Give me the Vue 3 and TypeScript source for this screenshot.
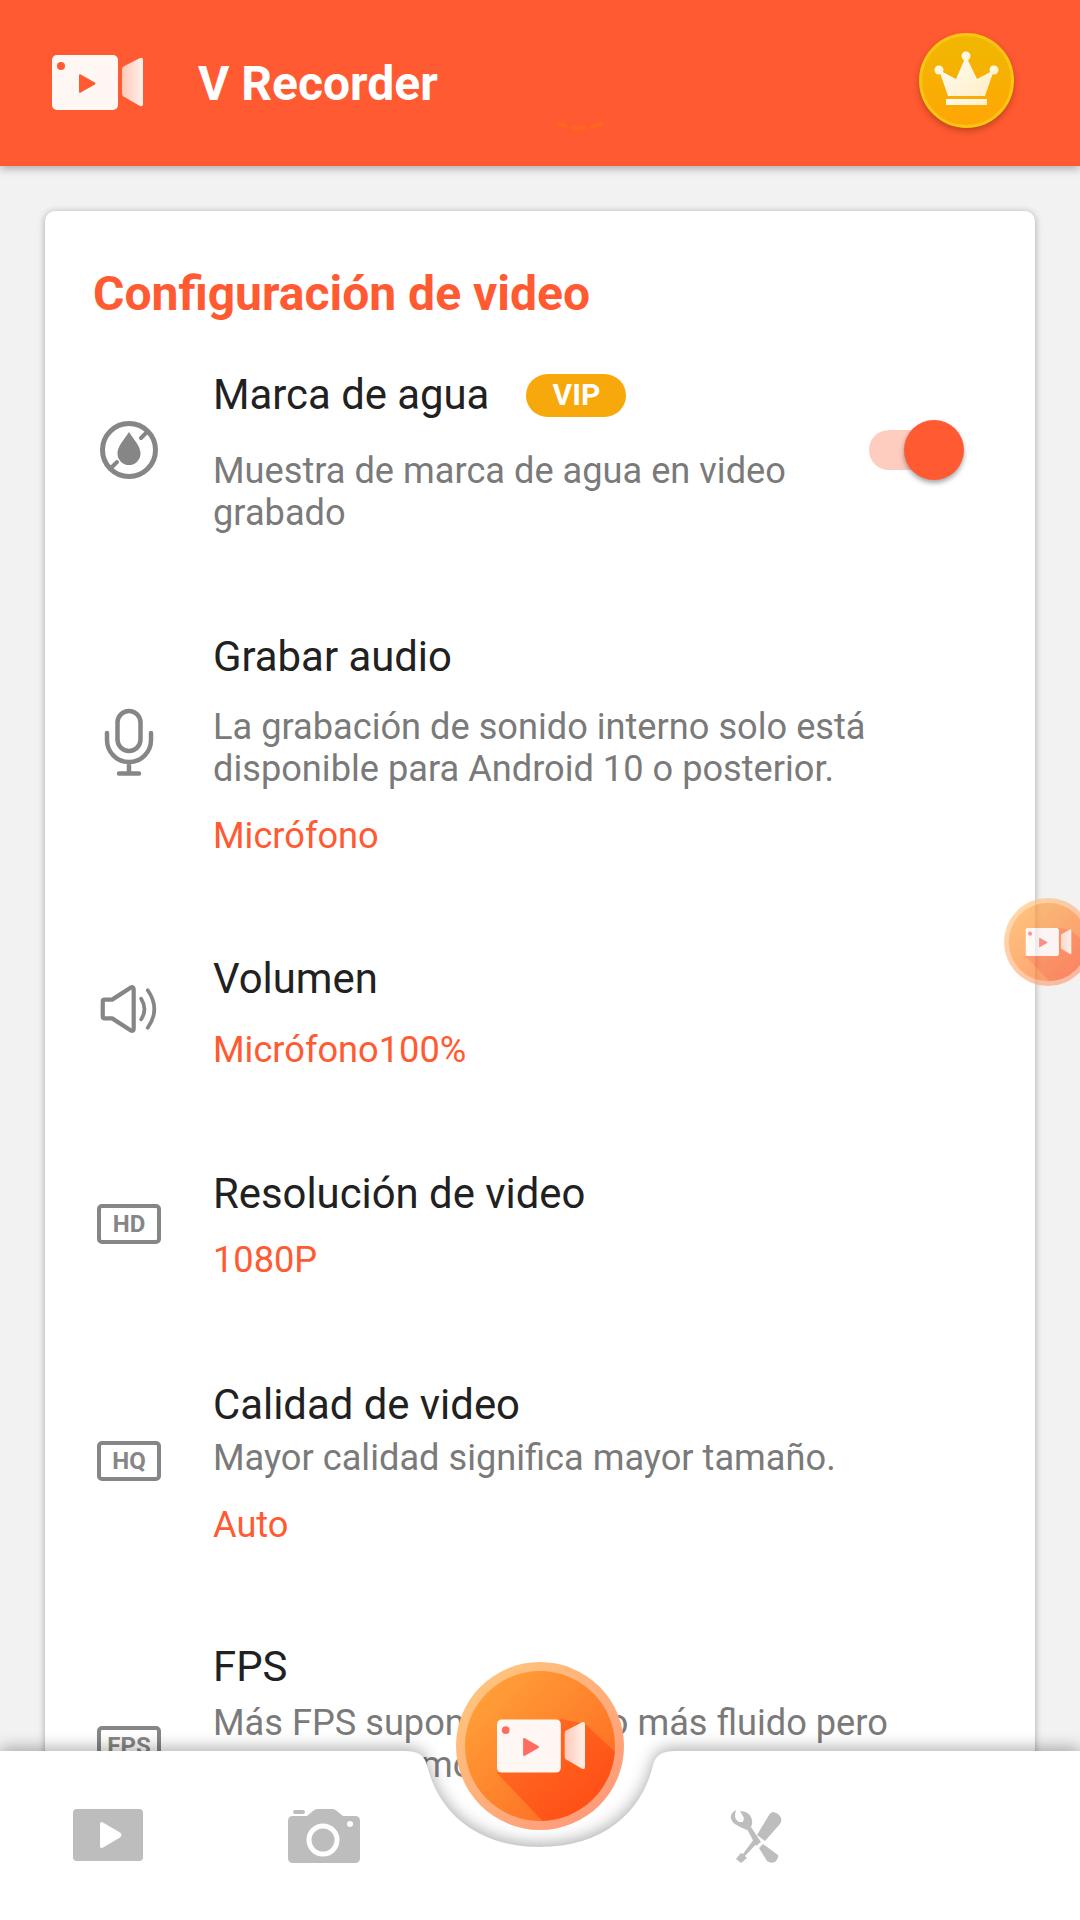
<template>
  <div class="screen">
    <!-- shared artwork for the camera logo and the round record button -->
    <svg class="defs" width="0" height="0" aria-hidden="true">
      <defs>
        <linearGradient id="cone" x1="0" y1="0" x2="1" y2="0">
          <stop offset="0" stop-color="#ffc9b8" />
          <stop offset="1" stop-color="#fff1ea" />
        </linearGradient>
        <linearGradient id="ring" x1="0.15" y1="0.1" x2="0.85" y2="0.9">
          <stop offset="0" stop-color="#ffc47c" />
          <stop offset="1" stop-color="#ff9a7a" />
        </linearGradient>
        <linearGradient id="disc" x1="0.12" y1="0.12" x2="0.88" y2="0.88">
          <stop offset="0" stop-color="#ff9f38" />
          <stop offset="1" stop-color="#ff6a22" />
        </linearGradient>
        <linearGradient id="long-shadow" x1="0.2" y1="0.2" x2="0.9" y2="0.9">
          <stop offset="0" stop-color="#ff6a22" />
          <stop offset="1" stop-color="#ff4713" />
        </linearGradient>
        <clipPath id="disc-clip"><circle cx="84" cy="84" r="75" /></clipPath>
        <symbol id="cam" viewBox="0 0 91 55">
          <rect x="0" y="0" width="66" height="55" rx="5" fill="#fff7f3" />
          <circle cx="9" cy="11" r="4" fill="currentColor" />
          <path d="M27 20.5q0-2 1.800-1l14 8q1.500 1 0 2l-14 8q-1.800 1-1.800-1z" fill="currentColor" />
          <path d="M70 14.500q0-2 1.500-3l16.500-8.500q3-1 3 2v44q0 3-3 2l-16.500-9.500q-1.500-1-1.500-3z" fill="url(#cone)" />
        </symbol>
        <symbol id="record" viewBox="0 0 168 168">
          <circle cx="84" cy="84" r="84" fill="url(#ring)" />
          <circle cx="84" cy="84" r="75" fill="url(#disc)" />
          <path d="M41 111L105 57L129 62L170 100L170 170L97 170Z" fill="url(#long-shadow)" clip-path="url(#disc-clip)" />
          <use href="#cam" x="41" y="57" width="88" height="54" />
        </symbol>
      </defs>
    </svg>

    <header class="app-bar">
      <svg class="app-logo" width="91" height="55"><use href="#cam" /></svg>
      <span class="app-name">V Recorder</span>
      <svg class="glitch" width="50" height="10" viewBox="0 0 50 10">
        <path d="M2 3l8 2M16 7h14M36 6l10-4" stroke="#ff6d12" stroke-width="2.500" stroke-linecap="round" fill="none" />
      </svg>
      <svg class="crown" width="95" height="95" viewBox="0 0 95 95">
        <defs>
          <linearGradient id="coin" x1="0" y1="0" x2="0" y2="1">
            <stop offset="0" stop-color="#f0b800" />
            <stop offset="1" stop-color="#ffa606" />
          </linearGradient>
          <linearGradient id="gold-white" x1="0" y1="0" x2="1" y2="1">
            <stop offset="0" stop-color="#fffdf6" />
            <stop offset="1" stop-color="#ffeec4" />
          </linearGradient>
        </defs>
        <circle cx="47.500" cy="47.500" r="46" fill="url(#coin)" stroke="#fbc512" stroke-width="3" />
        <g fill="url(#gold-white)">
          <circle cx="47" cy="23" r="4.500" />
          <circle cx="20" cy="37" r="4.500" />
          <circle cx="75" cy="37" r="4.500" />
          <path d="M20 37L37 46L47 23L58 46L75 37L66 63H29Z" />
          <rect x="27" y="66" width="41" height="6" />
        </g>
      </svg>
    </header>

    <main class="content">
      <section class="card">
        <h2 class="card-title">Configuración de video</h2>

        <div v-for="row in rows" :key="row.title" class="row" :class="row.mod">
          <div class="row-icon">
            <svg v-if="row.icon === 'drop'" width="64" height="64" viewBox="0 0 64 64">
              <circle cx="32" cy="32" r="26.500" fill="none" stroke="#868686" stroke-width="5" />
              <path d="M32 14c6 9 11.500 14.500 11.500 21.500a11.500 11.500 0 0 1-23 0C20.500 28.500 26 23 32 14z" fill="#868686" />
              <path d="M44 20l6-6M14 50l6-6" stroke="#868686" stroke-width="4" stroke-linecap="round" />
            </svg>
            <svg v-else-if="row.icon === 'mic'" class="mic" width="64" height="70" viewBox="0 0 64 70">
              <rect x="20.500" y="4" width="23" height="40" rx="11.500" fill="none" stroke="#868686" stroke-width="4.500" />
              <path d="M10 26v7a22 22 0 0 0 44 0v-7M32 55v11M22 66.500h20" fill="none" stroke="#868686" stroke-width="4.500" stroke-linecap="round" />
            </svg>
            <svg v-else-if="row.icon === 'speaker'" class="speaker" width="60" height="54" viewBox="0 0 64 54">
              <path d="M6 17h8L34 4q3-1 3 2v42q0 3-3 2L14 37H6q-2 0-2-2V19q0-2 2-2z" fill="none" stroke="#868686" stroke-width="4.500" stroke-linejoin="round" />
              <path d="M45 16q7 11 0 22M52 7q14 20 0 40" fill="none" stroke="#868686" stroke-width="4" stroke-linecap="round" />
            </svg>
            <span v-else class="tag-icon">{{ row.icon }}</span>
          </div>

          <div class="row-text">
            <div class="row-title">
              {{ row.title }}
              <span v-if="row.vip" class="vip">VIP</span>
            </div>
            <div v-if="row.desc" class="row-desc">{{ row.desc }}</div>
            <div v-if="row.value" class="row-value">{{ row.value }}</div>
          </div>

          <div v-if="row.toggle" class="switch"><span class="switch-knob" /></div>
        </div>
      </section>
    </main>

    <svg class="float-record" width="88" height="88"><use href="#record" /></svg>

    <nav class="tabs">
      <svg class="tabs-bg" width="1080" height="169" viewBox="0 0 1080 169">
        <path d="M0 0H404C418 0 424 4 427 14C438 62 478 96 540 96C602 96 642 62 653 14C656 4 662 0 676 0H1080V169H0Z" fill="#fff" />
      </svg>

      <div class="tab">
        <svg width="70" height="52" viewBox="0 0 70 52">
          <rect width="70" height="52" rx="4" fill="#bdbdbd" />
          <path d="M27 15q0-3 3-1.500l17 10q3 2.500 0 5l-17 10q-3 1.500-3-1.500z" fill="#fff" />
        </svg>
      </div>
      <div class="tab">
        <svg width="72" height="54" viewBox="0 0 72 54">
          <path d="M5 7h14l6-5q2-2 5-2h14q3 0 5 2l6 5h12q5 0 5 5v37q0 5-5 5H5q-5 0-5-5V12q0-5 5-5z" fill="#bdbdbd" />
          <rect x="5" y="1" width="12" height="4" rx="2" fill="#bdbdbd" />
          <circle cx="35" cy="31" r="14" fill="none" stroke="#fff" stroke-width="5" />
          <circle cx="62" cy="15" r="3" fill="#fff" />
        </svg>
      </div>
      <div class="tab" />
      <div class="tab">
        <svg width="54" height="54" viewBox="0 0 54 54">
          <path d="M44 3q6 1 8 6q1 3-1 6L36 32l-8-6L40 6q2-3 4-3z" fill="#bdbdbd" />
          <path d="M25 30l4 3-13 14 2 2-6 5-5-4 5-6 2 1z" fill="#bdbdbd" />
          <path d="M7 1q-3 9 3 12l4 0 1-4-4-7q8 0 11 6 3 7-1 11l-3 2-7-3Q0 13 2 6q1-3 5-5z" fill="#bdbdbd" />
          <path d="M18 20l4-2 10 15-5 4zM34 35l-4 4 8 13q4 3 8 1 4-3 3-7z" fill="#bdbdbd" />
        </svg>
      </div>
      <div class="tab" />

      <svg class="record-btn" width="168" height="168"><use href="#record" /></svg>
    </nav>
  </div>
</template>

<script setup lang="ts">
interface SettingRow {
  icon: string
  title: string
  desc?: string
  value?: string
  vip?: boolean
  toggle?: boolean
  mod: string
}

const rows: SettingRow[] = [
  {
    icon: 'drop',
    title: 'Marca de agua',
    desc: 'Muestra de marca de agua en video grabado',
    vip: true,
    toggle: true,
    mod: 'row-first'
  },
  {
    icon: 'mic',
    title: 'Grabar audio',
    desc: 'La grabación de sonido interno solo está disponible para Android 10 o posterior.',
    value: 'Micrófono',
    mod: 'row-wide'
  },
  { icon: 'speaker', title: 'Volumen', value: 'Micrófono100%', mod: 'row-volume' },
  { icon: 'HD', title: 'Resolución de video', value: '1080P', mod: 'row-tight' },
  {
    icon: 'HQ',
    title: 'Calidad de video',
    desc: 'Mayor calidad significa mayor tamaño.',
    value: 'Auto',
    mod: 'row-close'
  },
  {
    icon: 'FPS',
    title: 'FPS',
    desc: 'Más FPS supone un video más fluido pero mayor consumo.',
    value: 'Auto',
    mod: 'row-close row-last'
  }
]
</script>

<style>
html,
body {
  margin: 0;
  background: #f2f2f2;
}
</style>

<style scoped>
.screen {
  position: relative;
  width: 1080px;
  height: 1920px;
  overflow: hidden;
  background: #f2f2f2;
  font-family: Roboto, "Liberation Sans", sans-serif;
}

.defs {
  position: absolute;
}

.app-bar {
  position: relative;
  z-index: 2;
  display: flex;
  align-items: center;
  height: 166px;
  padding: 0 52px;
  box-sizing: border-box;
  background: #ff5a32;
  box-shadow: 0 3px 8px rgba(0, 0, 0, 0.28);
  color: #ff5a32;
}

.app-logo {
  margin-top: -1px;
}

.app-name {
  margin-left: 55px;
  font-size: 48px;
  font-weight: 700;
  color: #fff;
}

.glitch {
  position: absolute;
  left: 556px;
  top: 121px;
  filter: blur(0.8px);
}

.crown {
  margin-left: auto;
  margin-right: 14px;
  margin-top: -6px;
  filter: drop-shadow(0 3px 3px rgba(120, 40, 0, 0.45));
}

.content {
  padding: 45px 45px 0;
}

.card {
  min-height: 1800px;
  padding: 58px 49px 0 48px;
  background: #fff;
  border-radius: 10px;
  box-shadow: 0 1px 7px rgba(0, 0, 0, 0.32);
}

.card-title {
  margin: 0;
  font-size: 48px;
  line-height: 50px;
  font-weight: 700;
  color: #ff5a32;
}

.row {
  display: flex;
  align-items: center;
  padding: 47px 0;
}

.row-first {
  padding-top: 51px;
  padding-bottom: 48px;
}

.row-first .row-icon,
.row-first .switch {
  margin-top: -5px;
}

.row-wide {
  padding-top: 50px;
  padding-bottom: 48px;
}

.row-tight {
  padding-top: 48px;
}

.row-tight .tag-icon {
  margin-top: -4px;
}

.row-volume {
  padding-bottom: 48px;
}

.row-close {
  padding-top: 50px;
}

.row-close .tag-icon {
  margin-top: -6px;
}

.row-last {
  padding-top: 47px;
}

.row-icon {
  display: flex;
  justify-content: center;
  width: 70px;
  margin-left: 1px;
  flex-shrink: 0;
}

.mic {
  margin-top: -8px;
}

.speaker {
  margin-top: -10px;
}

.tag-icon {
  display: flex;
  align-items: center;
  justify-content: center;
  width: 64px;
  height: 40px;
  box-sizing: border-box;
  border: 4px solid #868686;
  border-radius: 5px;
  font-size: 24px;
  font-weight: 700;
  color: #868686;
}

.row-text {
  flex: 1;
  min-width: 0;
  margin-left: 49px;
}

.row-title {
  display: flex;
  align-items: center;
  font-size: 41.850px;
  line-height: 50px;
  color: #212121;
}

.row-desc {
  margin-top: 24px;
  font-size: 36.200px;
  line-height: 42px;
  color: #7a7a7a;
}

.row-first .row-desc {
  margin-top: 30px;
}

.row-close .row-desc {
  margin-top: 7px;
}

.row-last .row-desc {
  margin-top: 10px;
}

.row-value {
  margin-top: 23px;
  font-size: 36.200px;
  line-height: 46px;
  color: #ff5a32;
}

.row-tight .row-value {
  margin-top: 18px;
}

.vip {
  display: flex;
  align-items: center;
  justify-content: center;
  width: 100px;
  height: 43px;
  margin-left: 37px;
  border-radius: 22px;
  background: #f7a90c;
  font-size: 30px;
  font-weight: 700;
  color: #fff;
}

.switch {
  position: relative;
  flex-shrink: 0;
  width: 84px;
  height: 40px;
  margin-right: 33px;
  margin-left: 19px;
  border-radius: 20px;
  background: #ffccc0;
}

.switch-knob {
  position: absolute;
  top: -10px;
  right: -11px;
  width: 60px;
  height: 60px;
  border-radius: 50%;
  background: #ff5a32;
  box-shadow: 0 3px 5px rgba(0, 0, 0, 0.35);
}

.float-record {
  position: absolute;
  left: 1004px;
  top: 898px;
  opacity: 0.65;
  z-index: 3;
  color: #ff5a5a;
}

.tabs {
  position: absolute;
  left: 0;
  bottom: 0;
  z-index: 4;
  display: grid;
  grid-template-columns: repeat(5, 216px);
  width: 1080px;
  height: 169px;
}

.tabs-bg {
  position: absolute;
  left: 0;
  top: 0;
  filter: drop-shadow(0 -3px 8px rgba(0, 0, 0, 0.32));
}

.tab {
  position: relative;
  display: flex;
  justify-content: center;
  padding-top: 58px;
}

.tab svg {
  display: block;
}

.record-btn {
  position: absolute;
  left: 456px;
  top: -89px;
  color: #ff6b5e;
}
</style>
